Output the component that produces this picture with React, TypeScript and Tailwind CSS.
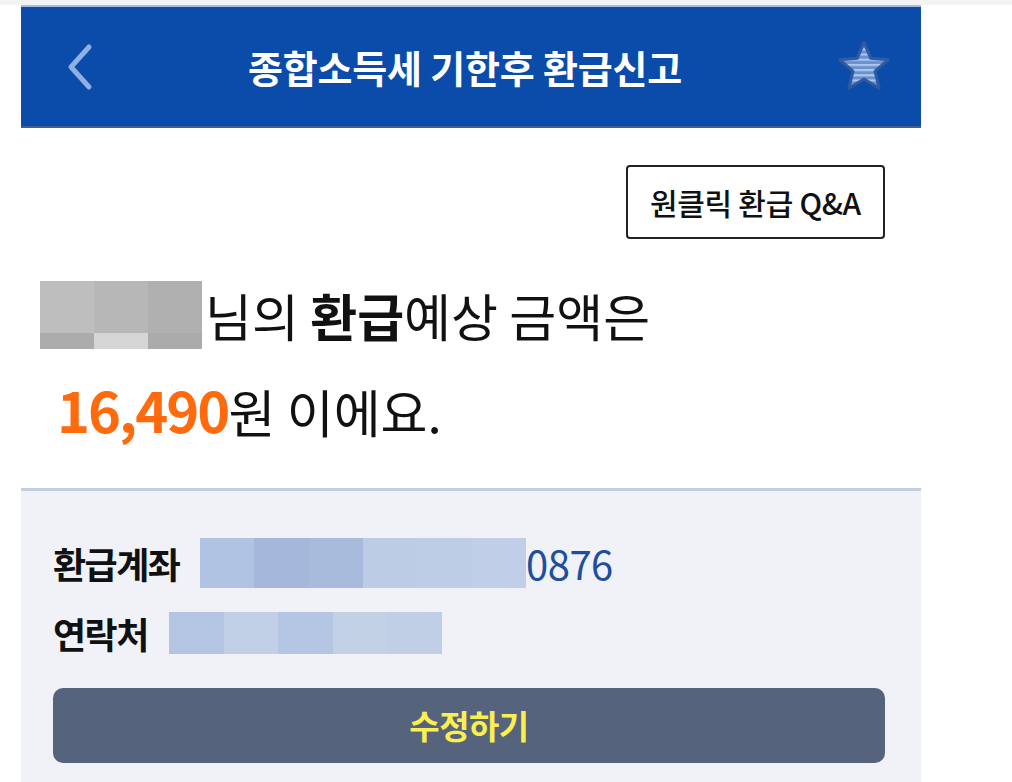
import React from 'react';

const BlurBlock: React.FC<{ colors: string[]; className?: string }> = ({ colors, className }) => (
  <div className={`flex shrink-0 ${className ?? ''}`}>
    {colors.map((c, i) => (
      <div key={i} className="flex-1" style={{ backgroundColor: c }} />
    ))}
  </div>
);

const BackIcon = () => (
  <svg width="30" height="48" viewBox="0 0 30 48" fill="none">
    <polyline points="24,4 6,24 24,44" stroke="#8fb0e2" strokeWidth="5" strokeLinecap="round" strokeLinejoin="round" />
  </svg>
);

const StarIcon = () => (
  <svg width="58" height="58" viewBox="0 0 56 56">
    <defs>
      <pattern id="stripes" width="56" height="5" patternUnits="userSpaceOnUse">
        <rect width="56" height="5" fill="#6a90cf" />
        <rect width="56" height="2" fill="#b0c7ec" />
      </pattern>
    </defs>
    <path
      d="M28 4 L34.6 19.6 L51.5 20.9 L38.7 32 L42.6 48.5 L28 39.6 L13.4 48.5 L17.3 32 L4.5 20.9 L21.4 19.6 Z"
      fill="url(#stripes)"
      stroke="#2d5aa3"
      strokeWidth="3"
      strokeLinejoin="round"
    />
  </svg>
);

export default function App() {
  return (
    <div className="w-[1012px] h-[782px] bg-white overflow-hidden font-['Noto_Sans_CJK_KR','Noto_Sans',sans-serif]">
      <div className="h-[5px] bg-[#f3f3f3]" />
      <div className="ml-[21px] w-[900px] flex flex-col">
        <header className="h-[123px] bg-[#0b4caa] border-t-2 border-[#a3bde6] border-b-2 border-b-[#3e6192] flex items-center justify-between pl-[44px] pr-[28px]">
          <BackIcon />
          <h1 className="text-white font-bold text-[38px] tracking-[-0.2px] leading-none whitespace-nowrap">종합소득세 기한후 환급신고</h1>
          <StarIcon />
        </header>

        <section className="flex flex-col">
          <div className="flex justify-end pr-[36px] mt-[37px]">
            <button className="w-[259px] h-[74px] border-2 border-[#222] rounded-[4px] text-[30px] text-[#111] font-medium tracking-[-0.3px] flex items-center justify-center whitespace-nowrap">
              원클릭 환급 Q&amp;A
            </button>
          </div>
          <div className="mt-[29px] h-[94px] flex items-center pl-[19px]">
            <div className="w-[162px] h-[68px] flex flex-col shrink-0">
              <BlurBlock colors={['#bebebe', '#b7b7b7', '#b0b0b0']} className="h-[52px]" />
              <BlurBlock colors={['#acacac', '#d5d5d5', '#ababab']} className="h-[16px]" />
            </div>
            <p className="ml-[3px] text-[51px] text-[#111] leading-none whitespace-nowrap">
              님의 <span className="font-bold">환급</span>예상 금액은
            </p>
          </div>
          <div className="h-[94px] flex items-center pl-[36px]">
            <p className="text-[51px] text-[#111] leading-none whitespace-nowrap">
              <span className="text-[56px] font-bold text-[#ff6a0c] tracking-[-2px]">16,490</span>원 이에요.
            </p>
          </div>
        </section>

        <section className="mt-[32px] border-t-[3px] border-[#c3cede] bg-[#f0f2f8] h-[294px] pl-[32px] pr-[36px] pt-[47px] flex flex-col">
          <div className="h-[50px] flex items-center">
            <span className="w-[147px] shrink-0 text-[36px] font-bold text-[#111] leading-none tracking-[-1.5px] whitespace-nowrap">환급계좌</span>
            <BlurBlock
              colors={['#b0c3e2', '#a5b8dc', '#a8bbdd', '#bccce5', '#bdcde6', '#c0cfe7']}
              className="w-[326px] h-[50px]"
            />
            <span className="text-[40px] text-[#1d4f9e] leading-none tracking-[-0.5px]">0876</span>
          </div>
          <div className="mt-[24px] h-[42px] flex items-center">
            <span className="w-[116px] shrink-0 text-[36px] font-bold text-[#111] leading-none tracking-[-1.5px] whitespace-nowrap">연락처</span>
            <BlurBlock
              colors={['#b3c5e2', '#c2d0e7', '#b4c6e3', '#c3d1e7', '#c1cfe6']}
              className="w-[273px] h-[42px]"
            />
          </div>
          <button className="mt-[34px] h-[75px] w-full rounded-[10px] bg-[#55647c] text-[#fbef4f] text-[33px] font-bold tracking-[-0.5px]">
            수정하기
          </button>
        </section>
      </div>
    </div>
  );
}
